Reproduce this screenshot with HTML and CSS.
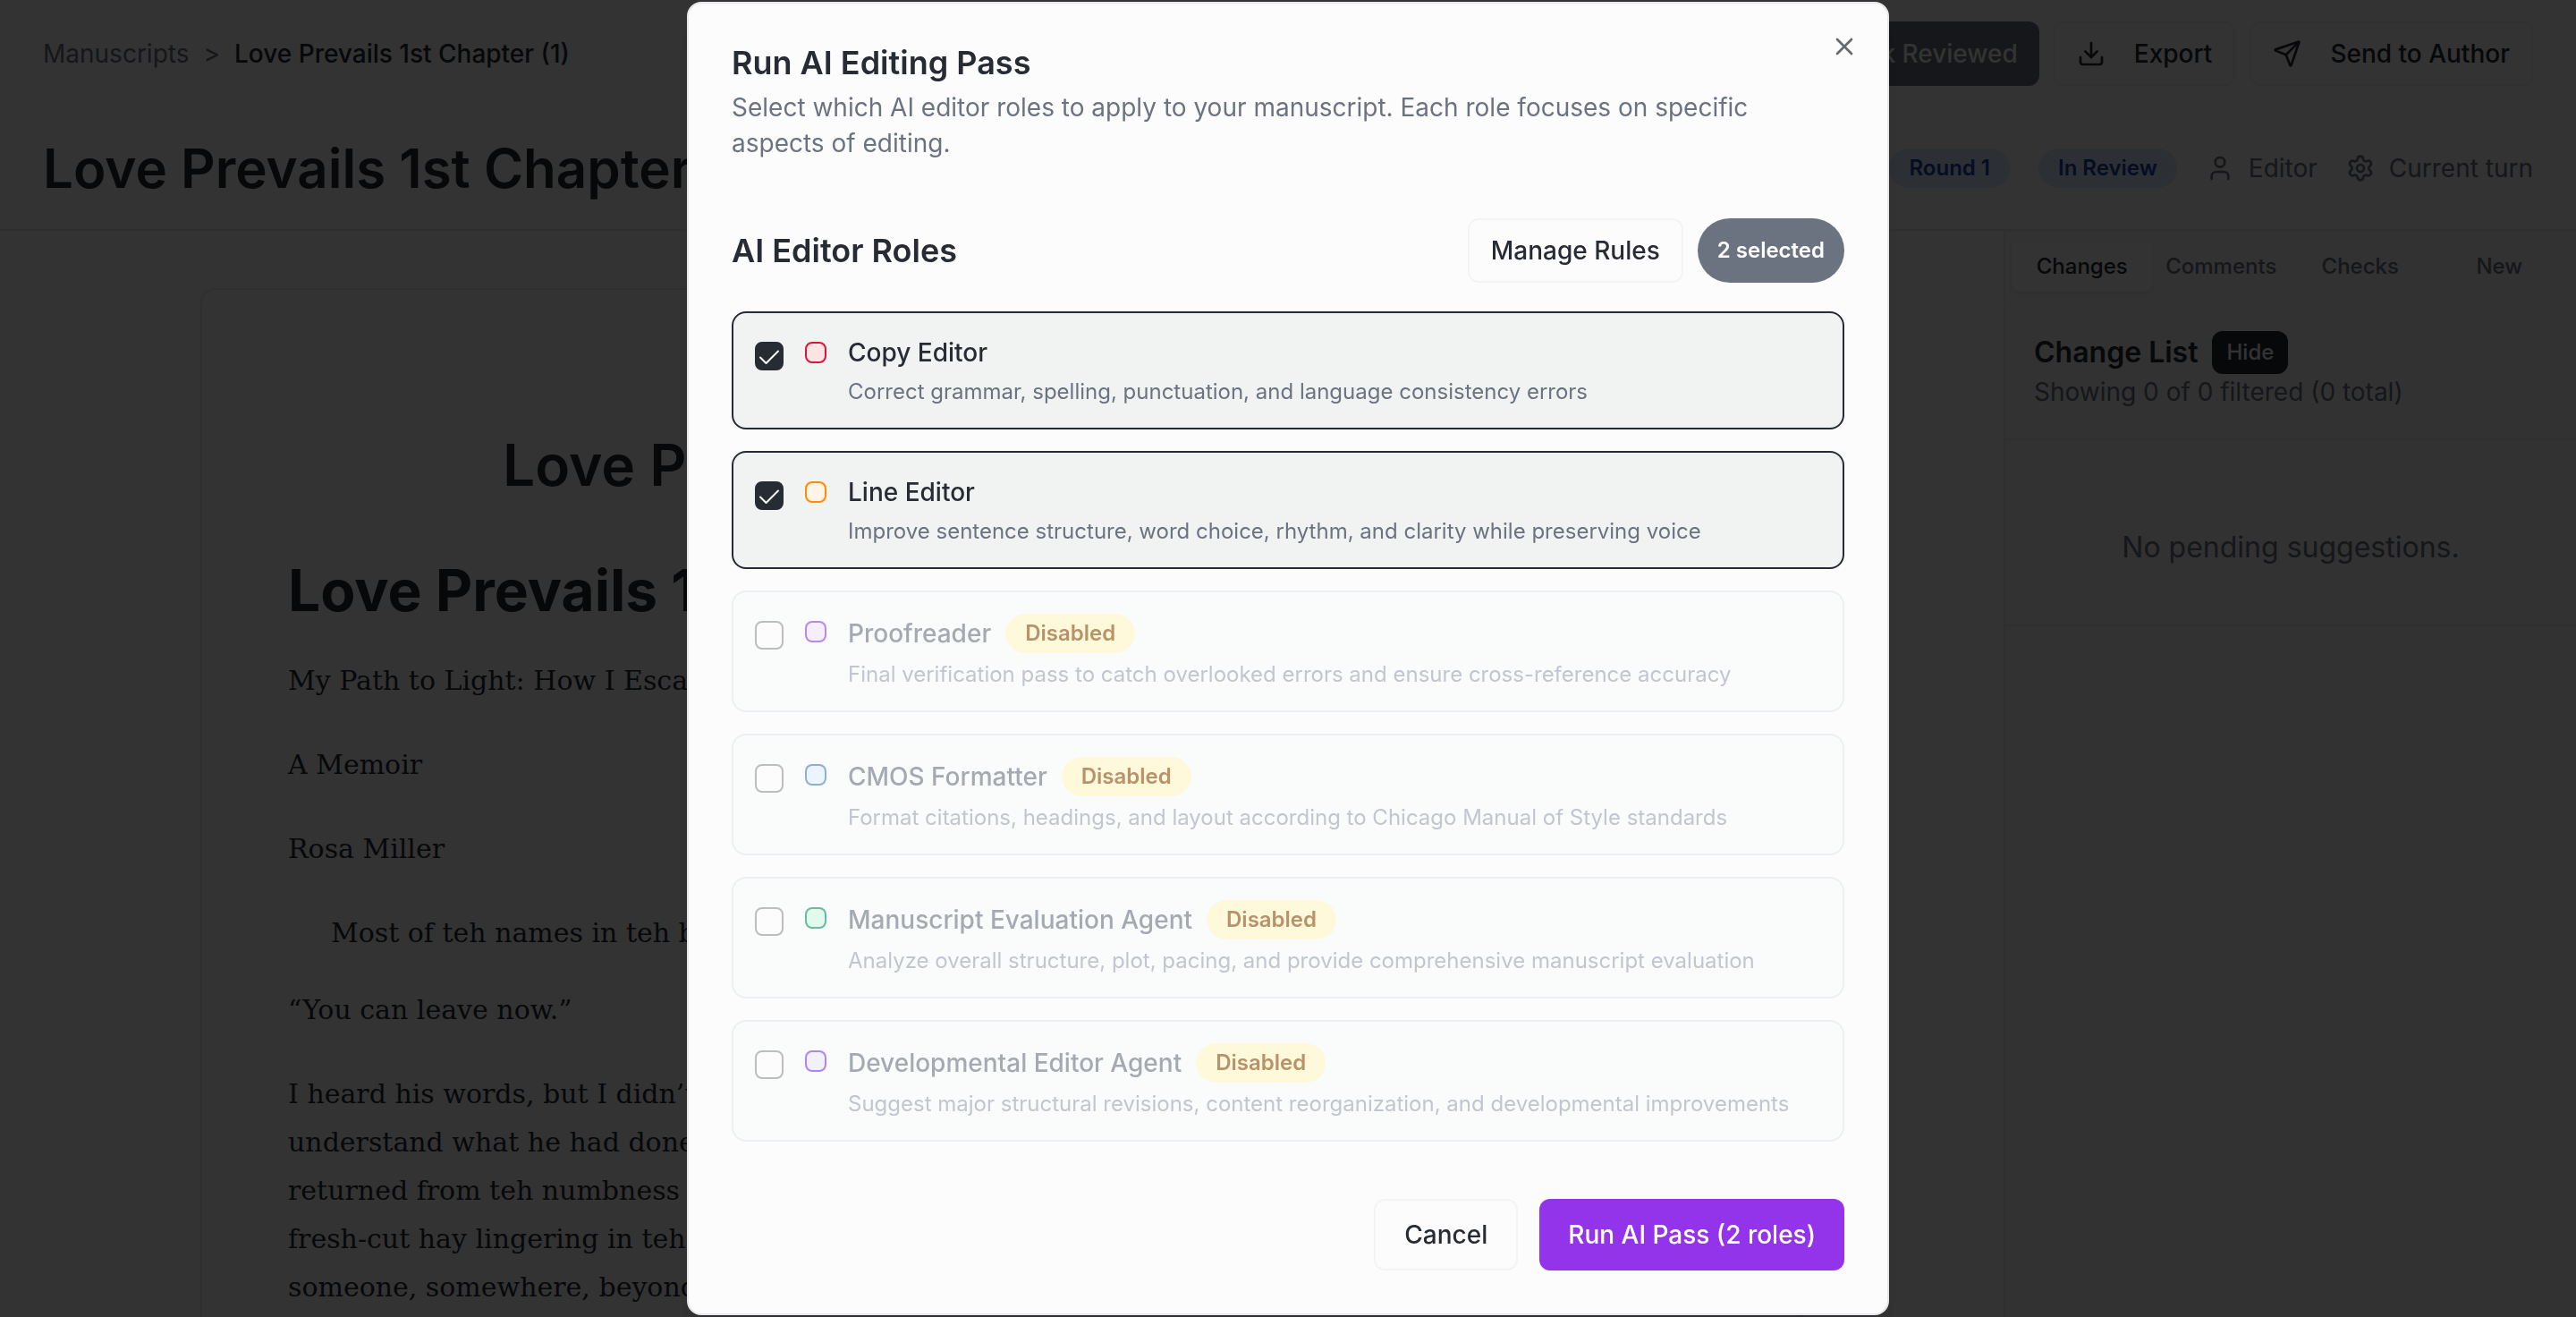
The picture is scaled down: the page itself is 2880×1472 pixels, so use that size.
FILE: index.html
```html
<!DOCTYPE html>
<html lang="en">
<head>
<meta charset="utf-8">
<title>Love Prevails 1st Chapter (1)</title>
<link rel="stylesheet" href="styles.css">
</head>
<body>
<div class="app">
  <header class="header">
    <div class="header-row">
      <nav class="breadcrumb" aria-label="Breadcrumb">
        <a href="#">Manuscripts</a>
        <span>&gt;</span>
        <span class="current">Love Prevails 1st Chapter (1)</span>
      </nav>
      <div class="actions">
        <button class="btn btn-muted" type="button">Mark Reviewed</button>
        <button class="btn" type="button">
          <svg class="icon" viewBox="0 0 24 24"><path d="M12 15V3"/><path d="M21 15v4a2 2 0 0 1-2 2H5a2 2 0 0 1-2-2v-4"/><path d="m7 10 5 5 5-5"/></svg>
          Export
        </button>
        <button class="btn" type="button">
          <svg class="icon" viewBox="0 0 24 24"><path d="M14.536 21.686a.5.5 0 0 0 .937-.024l6.5-19a.496.496 0 0 0-.635-.635l-19 6.5a.5.5 0 0 0-.024.937l7.93 3.18a2 2 0 0 1 1.112 1.11z"/><path d="m21.854 2.147-10.94 10.939"/></svg>
          Send to Author
        </button>
      </div>
    </div>
    <div class="header-row">
      <h1 class="page-title">Love Prevails 1st Chapter (1)</h1>
      <div class="status">
        <span class="pill">Round 1</span>
        <span class="pill">In Review</span>
        <span class="meta">
          <svg class="icon" viewBox="0 0 24 24"><path d="M19 21v-2a4 4 0 0 0-4-4H9a4 4 0 0 0-4 4v2"/><circle cx="12" cy="7" r="4"/></svg>
          Editor
        </span>
        <span class="meta">
          <svg class="icon" viewBox="0 0 24 24"><path d="M9.671 4.136a2.34 2.34 0 0 1 4.659 0 2.34 2.34 0 0 0 3.319 1.915 2.34 2.34 0 0 1 2.33 4.033 2.34 2.34 0 0 0 0 3.831 2.34 2.34 0 0 1-2.33 4.033 2.34 2.34 0 0 0-3.319 1.915 2.34 2.34 0 0 1-4.659 0 2.34 2.34 0 0 0-3.32-1.915 2.34 2.34 0 0 1-2.33-4.033 2.34 2.34 0 0 0 0-3.831A2.34 2.34 0 0 1 6.35 6.051a2.34 2.34 0 0 0 3.319-1.915"/><circle cx="12" cy="12" r="3"/></svg>
          Current turn
        </span>
      </div>
    </div>
  </header>
  <div class="body">
    <main class="workspace">
      <article class="sheet">
        <h2 class="doc-title">Love Prevails</h2>
        <h2 class="doc-heading">Love Prevails 1st</h2>
        <p>My Path to Light: How I Escaped</p>
        <p>A Memoir</p>
        <p>Rosa Miller</p>
        <p class="indent">Most of teh names in teh book</p>
        <p>“You can leave now.”</p>
        <p>I heard his words, but I didn’t<br>understand what he had done<br>returned from teh numbness<br>fresh-cut hay lingering in teh<br>someone, somewhere, beyond</p>
      </article>
    </main>
    <aside class="panel">
      <div class="tabs" role="tablist">
        <button class="tab tab-active" role="tab" aria-selected="true" type="button">Changes</button>
        <button class="tab" role="tab" type="button">Comments</button>
        <button class="tab" role="tab" type="button">Checks</button>
        <button class="tab" role="tab" type="button">New</button>
      </div>
      <div class="change-head">
        <div class="change-title">
          <h3>Change List</h3>
          <button class="hide" type="button">Hide</button>
        </div>
        <p>Showing 0 of 0 filtered (0 total)</p>
      </div>
      <p class="empty">No pending suggestions.</p>
    </aside>
  </div>
</div>

<div class="overlay">
  <section class="dialog" role="dialog" aria-modal="true" aria-labelledby="dialog-title">
    <button class="close" type="button" aria-label="Close">
      <svg class="icon" viewBox="0 0 24 24"><path d="M18 6 6 18"/><path d="m6 6 12 12"/></svg>
    </button>
    <header class="dialog-head">
      <h2 id="dialog-title">Run AI Editing Pass</h2>
      <p>Select which AI editor roles to apply to your manuscript. Each role focuses on specific aspects of editing.</p>
    </header>
    <div class="roles-head">
      <h3>AI Editor Roles</h3>
      <button class="btn manage" type="button">Manage Rules</button>
      <span class="count">2 selected</span>
    </div>
    <div class="roles">
      <label class="role role-selected">
        <input class="check" type="checkbox" checked>
        <span class="swatch red"></span>
        <span class="role-text">
          <span class="role-name">Copy Editor</span>
          <span class="role-desc">Correct grammar, spelling, punctuation, and language consistency errors</span>
        </span>
      </label>
      <label class="role role-selected">
        <input class="check" type="checkbox" checked>
        <span class="swatch orange"></span>
        <span class="role-text">
          <span class="role-name">Line Editor</span>
          <span class="role-desc">Improve sentence structure, word choice, rhythm, and clarity while preserving voice</span>
        </span>
      </label>
      <label class="role">
        <input class="check" type="checkbox" disabled>
        <span class="swatch purple"></span>
        <span class="role-text">
          <span class="role-name">Proofreader <span class="tag">Disabled</span></span>
          <span class="role-desc">Final verification pass to catch overlooked errors and ensure cross-reference accuracy</span>
        </span>
      </label>
      <label class="role">
        <input class="check" type="checkbox" disabled>
        <span class="swatch blue"></span>
        <span class="role-text">
          <span class="role-name">CMOS Formatter <span class="tag">Disabled</span></span>
          <span class="role-desc">Format citations, headings, and layout according to Chicago Manual of Style standards</span>
        </span>
      </label>
      <label class="role">
        <input class="check" type="checkbox" disabled>
        <span class="swatch green"></span>
        <span class="role-text">
          <span class="role-name">Manuscript Evaluation Agent <span class="tag">Disabled</span></span>
          <span class="role-desc">Analyze overall structure, plot, pacing, and provide comprehensive manuscript evaluation</span>
        </span>
      </label>
      <label class="role">
        <input class="check" type="checkbox" disabled>
        <span class="swatch violet"></span>
        <span class="role-text">
          <span class="role-name">Developmental Editor Agent <span class="tag">Disabled</span></span>
          <span class="role-desc">Suggest major structural revisions, content reorganization, and developmental improvements</span>
        </span>
      </label>
    </div>
    <footer class="dialog-foot">
      <button class="btn btn-large" type="button">Cancel</button>
      <button class="btn btn-large btn-primary" type="button">Run AI Pass (2 roles)</button>
    </footer>
  </section>
</div>
</body>
</html>
```
FILE: styles.css
```css
:root {
  --fg: #272b33;
  --muted: #6b7280;
  --bg: #fcfcfc;
  --line: #f1f2f3;
}

* {
  box-sizing: border-box;
}

html,
body {
  height: 100%;
  overflow: hidden;
}

body {
  margin: 0;
  background: var(--bg);
  color: var(--fg);
  font-family: Inter, "Liberation Sans", sans-serif;
  font-size: 28px;
  line-height: 40px;
}

h1,
h2,
h3,
p {
  margin: 0;
}

button {
  font: inherit;
  color: inherit;
}

.icon {
  width: 32px;
  height: 32px;
  flex: none;
  fill: none;
  stroke: currentColor;
  stroke-width: 2;
  stroke-linecap: round;
  stroke-linejoin: round;
}

/* Page */

.app {
  height: 100%;
  display: flex;
  flex-direction: column;
  overflow: hidden;
}

.header {
  padding: 24px 48px 32px;
  display: flex;
  flex-direction: column;
  gap: 56px;
  border-bottom: 2px solid #e5e7eb;
}

.header-row {
  display: flex;
  align-items: center;
  justify-content: space-between;
}

.breadcrumb {
  display: flex;
  gap: 16px;
  color: var(--muted);
}

.breadcrumb a {
  color: inherit;
  text-decoration: none;
}

.breadcrumb .current {
  color: var(--fg);
  font-weight: 500;
}

.actions {
  display: flex;
  gap: 16px;
}

.btn {
  display: flex;
  align-items: center;
  justify-content: center;
  gap: 32px;
  height: 72px;
  padding: 0 24px;
  border: 2px solid #f4f4f5;
  border-radius: 12px;
  background: var(--bg);
  font-weight: 500;
}

.btn-muted {
  border: 0;
  background: var(--muted);
  color: var(--bg);
}

.page-title {
  font-size: 60px;
  line-height: 72px;
  font-weight: 600;
}

.status {
  display: flex;
  align-items: center;
  gap: 32px;
  color: var(--muted);
}

.pill {
  padding: 6px 22px;
  border-radius: 22px;
  background: #dbeafe;
  color: #1e40af;
  font-size: 24px;
  line-height: 32px;
  font-weight: 600;
}

.meta {
  display: flex;
  align-items: center;
  gap: 16px;
}

.body {
  flex: 1;
  min-height: 0;
  display: flex;
}

.workspace {
  flex: 1;
  padding: 64px 48px 0;
  overflow: hidden;
}

.sheet {
  max-width: 1792px;
  min-height: 100%;
  margin: 0 auto;
  padding: 148px 96px 0;
  border: 2px solid #ebebee;
  border-bottom: 0;
  border-radius: 16px 16px 0 0;
  font-family: "DejaVu Serif", "Liberation Serif", serif;
  font-size: 30px;
  line-height: 54px;
}

.doc-title,
.doc-heading {
  font-family: Inter, "Liberation Sans", sans-serif;
  font-size: 64px;
  line-height: 96px;
}

.doc-title {
  padding-left: 240px;
  font-weight: 600;
}

.doc-heading {
  margin: 44px 0 26px;
  font-weight: 700;
}

.sheet p {
  margin-bottom: 40px;
}

.sheet .indent {
  margin-bottom: 32px;
  text-indent: 48px;
}

.sheet p:last-child {
  margin-bottom: 0;
}

.panel {
  flex: none;
  width: 640px;
  border-left: 2px solid #ebebee;
  background: #f7f7f7;
}

.tabs {
  display: grid;
  grid-template-columns: repeat(4, 1fr);
  padding: 12px 8px;
  border-bottom: 2px solid var(--line);
}

.tab {
  height: 56px;
  padding: 0;
  border: 0;
  border-radius: 8px;
  background: none;
  color: var(--muted);
  font-size: 24px;
  font-weight: 500;
}

.tab-active {
  background: var(--bg);
  color: var(--fg);
  box-shadow: 0 2px 4px rgba(0, 0, 0, 0.05);
}

.change-head {
  padding: 30px 32px 32px;
  border-bottom: 2px solid #ebebee;
  color: var(--muted);
}

.change-title {
  display: flex;
  align-items: center;
  gap: 16px;
  color: var(--fg);
}

.change-title h3 {
  font-size: 32px;
  font-weight: 600;
}

.hide {
  height: 48px;
  padding: 0 16px;
  border: 0;
  border-radius: 12px;
  background: var(--fg);
  color: var(--bg);
  font-size: 24px;
  font-weight: 500;
}

.empty {
  padding: 96px 32px 62px;
  border-bottom: 2px solid #ebebee;
  color: var(--muted);
  font-size: 32px;
  line-height: 48px;
  text-align: center;
}

/* Dialog */

.overlay {
  position: fixed;
  inset: 0;
  display: flex;
  align-items: center;
  justify-content: center;
  background: rgba(0, 0, 0, 0.8);
}

.dialog {
  position: relative;
  width: 1344px;
  max-width: 100%;
  padding: 48px;
  border: 2px solid #e5e7eb;
  border-radius: 16px;
  background: var(--bg);
  box-shadow: 0 20px 30px -6px rgba(0, 0, 0, 0.1), 0 8px 12px -8px rgba(0, 0, 0, 0.1);
}

.close {
  position: absolute;
  top: 32px;
  right: 32px;
  display: flex;
  padding: 0;
  border: 0;
  background: none;
  opacity: 0.7;
}

.dialog-head {
  padding-right: 48px;
}

.dialog-head h2,
.roles-head h3 {
  font-size: 36px;
  line-height: 36px;
  font-weight: 600;
}

.dialog-head p {
  margin-top: 12px;
  color: var(--muted);
}

.roles-head {
  display: flex;
  align-items: center;
  gap: 16px;
  margin: 64px 0 32px;
}

.roles-head h3 {
  flex: 1;
}

.count {
  padding: 20px 22px;
  border-radius: 36px;
  background: var(--muted);
  color: #ffffff;
  font-size: 24px;
  line-height: 32px;
  font-weight: 600;
}

.roles {
  display: grid;
  gap: 24px;
}

.role {
  display: flex;
  align-items: flex-start;
  gap: 24px;
  padding: 24px;
  border: 2px solid #eeeff2;
  border-radius: 16px;
  background: #fafcfb;
  color: #a5aab2;
}

.role-selected {
  border-color: var(--fg);
  background: #f1f3f2;
  color: var(--fg);
}

.check {
  appearance: none;
  width: 32px;
  height: 32px;
  flex: none;
  margin: 8px 0 0;
  border: 2px solid #bcbdbf;
  border-radius: 8px;
  background: var(--bg);
}

.check:checked {
  border-color: var(--fg);
  background: var(--fg) url("data:image/svg+xml,%3Csvg xmlns='http://www.w3.org/2000/svg' viewBox='0 0 32 32' fill='none' stroke='white' stroke-width='2' stroke-linecap='round' stroke-linejoin='round'%3E%3Cpath d='M6 17.5 12.5 24 26 10.5'/%3E%3C/svg%3E") center / 32px 32px no-repeat;
}

.swatch {
  width: 24px;
  height: 24px;
  flex: none;
  margin-top: 8px;
  border: 2px solid;
  border-radius: 8px;
}

.red { border-color: #dc143c; background: #ffe4e4; }
.orange { border-color: #ff8c00; background: #fff4e5; }
.purple { border-color: #b987f0; background: #f6edfe; }
.blue { border-color: #8ab0d8; background: #ecf4ff; }
.green { border-color: #67bd9f; background: #e2faee; }
.violet { border-color: #ab87f5; background: #f2effe; }

.role-text {
  display: grid;
  gap: 8px;
}

.role-name {
  display: flex;
  align-items: center;
  gap: 16px;
  font-weight: 500;
}

.tag {
  padding: 6px 22px;
  border-radius: 22px;
  background: #fef9da;
  color: #b7926a;
  font-size: 24px;
  line-height: 32px;
  font-weight: 600;
}

.role-desc {
  color: #c2c6cd;
  font-size: 24px;
  line-height: 32px;
}

.role-selected .role-desc {
  color: var(--muted);
}

.dialog-foot {
  display: flex;
  justify-content: flex-end;
  gap: 24px;
  margin-top: 64px;
}

.btn-large {
  height: 80px;
  padding: 0 32px;
}

.btn-primary {
  border: 0;
  background: #9333ea;
  color: #ffffff;
}
```
